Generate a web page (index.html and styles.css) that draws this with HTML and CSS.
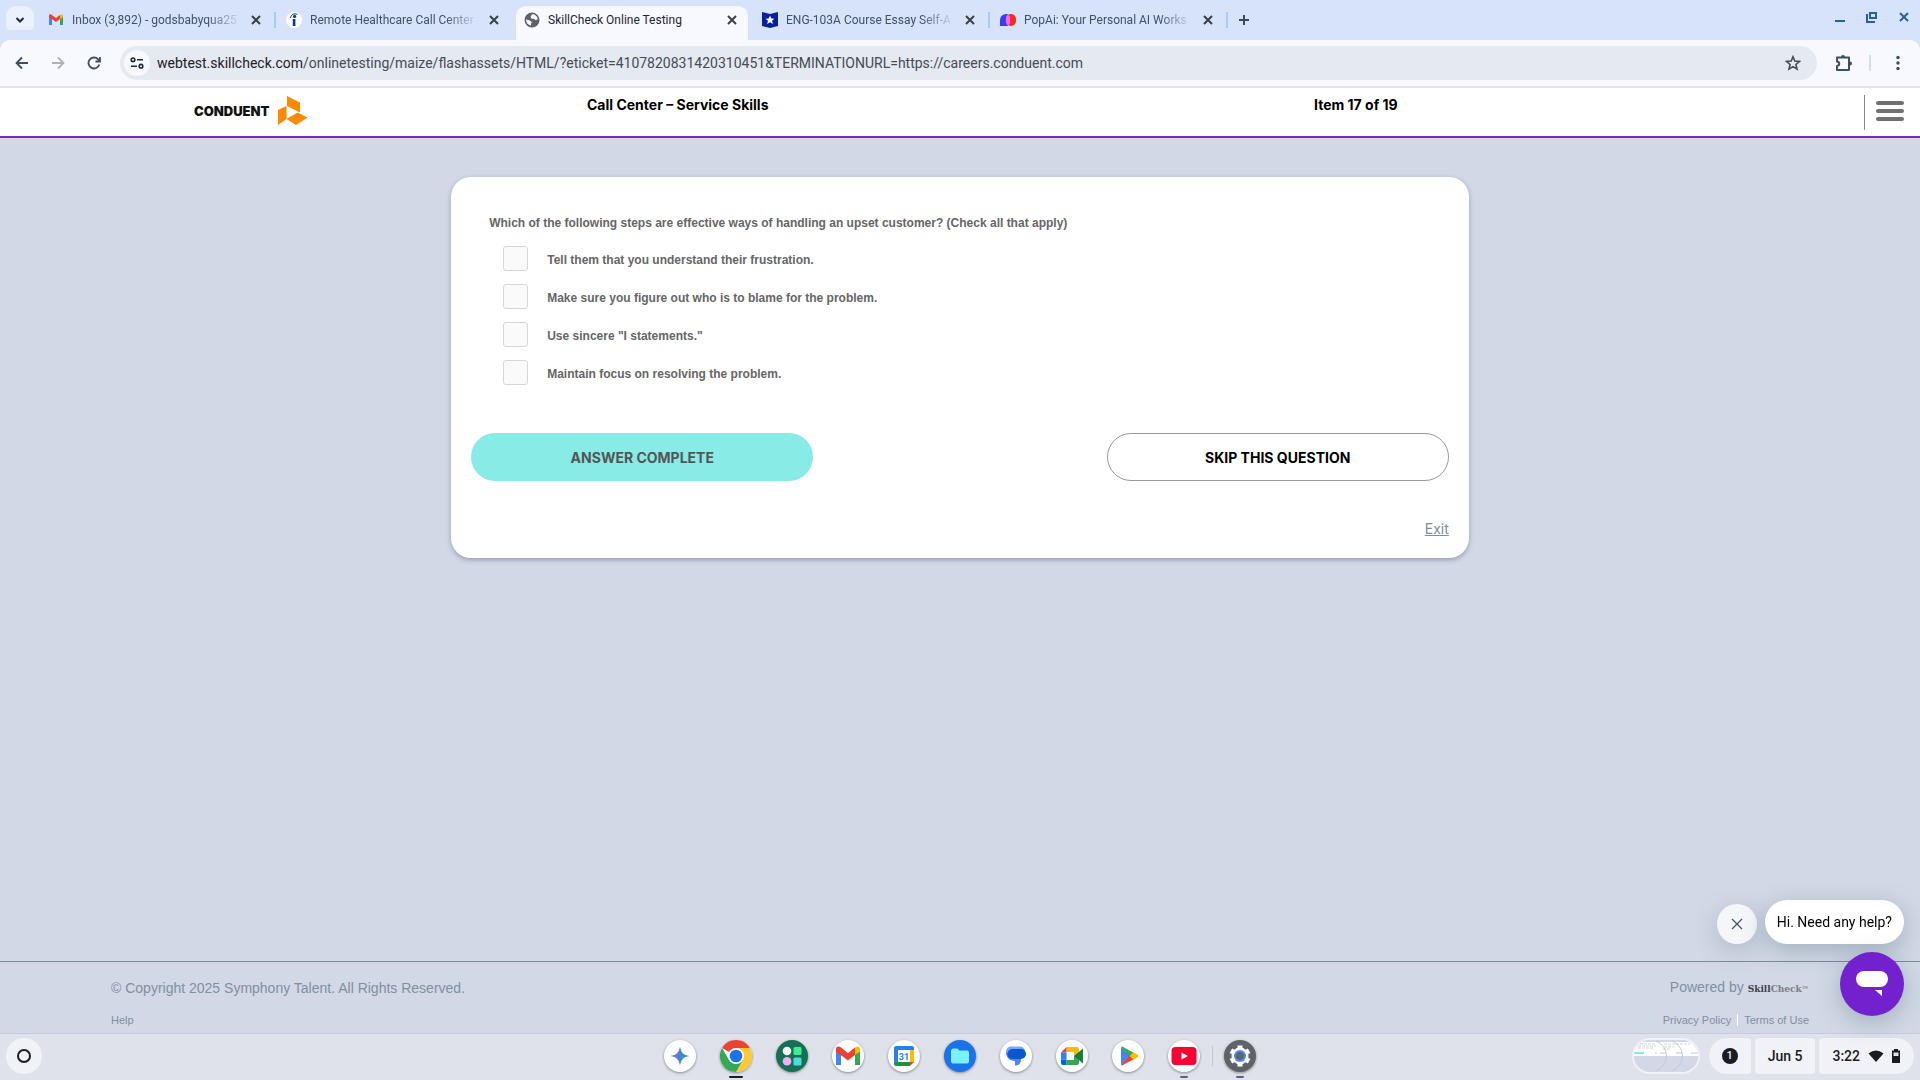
FILE: index.html
```html
<!DOCTYPE html>
<html lang="en">
<head>
    <meta charset="UTF-8">
    <meta name="viewport" content="width=device-width, initial-scale=1.0">
    <title>SkillCheck Online Testing</title>
    <link rel="stylesheet" href="styles.css">
</head>
<body>
    <!-- Tab strip -->
    <div class="tab-strip">
        <button class="tab-search" aria-label="Search tabs">
            <svg width="10" height="10" viewBox="0 0 10 10"><path d="M1.5 3l3.500 3.500L8.500 3" fill="none" stroke="#1f2937" stroke-width="2"/></svg>
        </button>
        <div class="tab">
            <svg class="favicon" viewBox="0 0 16 16"><path d="M1 4v9h3V6z" fill="#4285f4"/><path d="M12 6v7h3V4z" fill="#34a853"/><path d="M1 3.500C1 2 3 2 4 3l4 3v4L1 5z" fill="#ea4335"/><path d="M8 6l4-3v4L8 10z" fill="#ea4335"/><path d="M12 3c1-1 3-1 3 .5V5l-3 2.200z" fill="#fbbc04"/></svg>
            <span class="tab-title fade">Inbox (3,892) - godsbabyqua25</span>
            <button class="tab-close" aria-label="Close tab"><svg width="10" height="10" viewBox="0 0 10 10"><path d="M1 1l8 8M9 1L1 9"/></svg></button>
        </div>
        <div class="tab">
            <svg class="favicon" viewBox="0 0 16 16"><circle cx="8" cy="8" r="8" fill="#fff"/><path d="M6.800 7h2.600v7H6.800z" fill="#003a9b"/><circle cx="8.600" cy="4.400" r="1.600" fill="#003a9b"/><path d="M4.500 6C5 2.500 8 .8 11.500 2.500" fill="none" stroke="#003a9b"/></svg>
            <span class="tab-title fade">Remote Healthcare Call Center</span>
            <button class="tab-close" aria-label="Close tab"><svg width="10" height="10" viewBox="0 0 10 10"><path d="M1 1l8 8M9 1L1 9"/></svg></button>
        </div>
        <div class="tab active">
            <svg class="favicon" viewBox="0 0 16 16"><circle cx="8" cy="8" r="7.500" fill="#5f6368"/><path d="M2 7.500l4 1 2 2-1 1v2C4 13 2 11 2 7.500zM8 2.200c3 0 5.500 2 5.800 5l-2 1-2-1.500H7.500L6.500 5z" fill="#f8f9fe"/></svg>
            <span class="tab-title">SkillCheck Online Testing</span>
            <button class="tab-close" aria-label="Close tab"><svg width="10" height="10" viewBox="0 0 10 10"><path d="M1 1l8 8M9 1L1 9"/></svg></button>
        </div>
        <div class="tab">
            <svg class="favicon" viewBox="0 0 16 16"><path d="M0 0l8 2 8-2v14l-8 2-8-2z" fill="#0a1f9c"/><path d="M8 3.500l1.300 3 3.200.2-2.500 2 .9 3.200L8 10.200l-2.900 1.700.9-3.200-2.500-2 3.200-.2z" fill="#fff"/></svg>
            <span class="tab-title fade">ENG-103A Course Essay Self-A</span>
            <button class="tab-close" aria-label="Close tab"><svg width="10" height="10" viewBox="0 0 10 10"><path d="M1 1l8 8M9 1L1 9"/></svg></button>
        </div>
        <div class="tab">
            <svg class="favicon" viewBox="0 0 16 16"><path d="M0 14V8a6 6 0 0 1 6-6c3 0 4 2 4 6s-1 6-4 6z" fill="#3b3bff"/><rect x="6" y="2" width="10" height="12" rx="5" fill="#ff2a1c"/><ellipse cx="8" cy="8" rx="2.200" ry="5" fill="#f76bf0"/></svg>
            <span class="tab-title fade">PopAi: Your Personal AI Works</span>
            <button class="tab-close" aria-label="Close tab"><svg width="10" height="10" viewBox="0 0 10 10"><path d="M1 1l8 8M9 1L1 9"/></svg></button>
        </div>
        <button class="new-tab" aria-label="New tab"><svg width="12" height="12" viewBox="0 0 12 12"><path d="M6 1v10M1 6h10" stroke="#3c4858" stroke-width="2"/></svg></button>
        <div class="window-controls">
            <button aria-label="Minimize"><svg width="12" height="12" viewBox="0 0 12 12"><path d="M1 10h10" stroke="#28609f" stroke-width="2"/></svg></button>
            <button aria-label="Restore"><svg width="12" height="12" viewBox="0 0 12 12"><path d="M4 2h6v5H4zM1 3v8h8" fill="none" stroke="#28609f" stroke-width="2"/></svg></button>
            <button aria-label="Close"><svg width="12" height="12" viewBox="0 0 12 12"><path d="M2 2l8 8M10 2l-8 8" stroke="#28609f" stroke-width="2"/></svg></button>
        </div>
    </div>

    <!-- Toolbar -->
    <div class="toolbar">
        <button class="nav-btn" aria-label="Back"><svg width="14" height="14" viewBox="0 0 14 14"><path d="M13 7H2M7 1.500L1.500 7 7 12.500" fill="none" stroke="#3f4d60" stroke-width="1.800"/></svg></button>
        <button class="nav-btn" aria-label="Forward"><svg width="14" height="14" viewBox="0 0 14 14"><path d="M1 7h11M7 1.500L12.500 7 7 12.500" fill="none" stroke="#aeb1b8" stroke-width="1.800"/></svg></button>
        <button class="nav-btn" aria-label="Reload"><svg width="14" height="14" viewBox="0 0 14 14"><path d="M12.300 8.500A5.500 5.500 0 1 1 11 3.200L12.500 5M13 1v4.500H8.500" fill="none" stroke="#3f4d60" stroke-width="1.800"/></svg></button>
        <div class="omnibox">
            <button class="site-info" aria-label="View site information"><svg width="14" height="12" viewBox="0 0 14 12"><g fill="none" stroke="#1f2937" stroke-width="1.600"><circle cx="3" cy="2.800" r="1.800"/><path d="M7 2.800h6M1 9.200h6"/><circle cx="11" cy="9.200" r="1.800"/></g></svg></button>
            <a class="url" href="#"><span class="host">webtest.skillcheck.com</span>/onlinetesting/maize/flashassets/HTML/?eticket=4107820831420310451&amp;TERMINATIONURL=https://careers.conduent.com</a>
            <button class="bookmark" aria-label="Bookmark this tab"><svg width="16" height="16" viewBox="0 0 16 16"><path d="M8 1.800l1.800 4.300 4.600.4-3.500 3 1.100 4.600L8 11.600l-4 2.500 1.100-4.600-3.500-3 4.600-.4z" fill="none" stroke="#444b58" stroke-width="1.600"/></svg></button>
        </div>
        <button class="extensions" aria-label="Extensions"><svg width="18" height="18" viewBox="0 0 18 18"><path d="M2 3.500h12v12.500H2v-4c3-.5 3-4 0-4.500z" fill="none" stroke="#3f4d60" stroke-width="2" stroke-linejoin="round"/><path d="M6 3a2 2 0 0 1 4 0zM15 7.500a2 2 0 0 1 0 4z" fill="#3f4d60"/></svg></button>
        <span class="toolbar-divider"></span>
        <button class="menu-btn" aria-label="Chrome menu"><svg width="4" height="16" viewBox="0 0 4 16"><g fill="#3f4d60"><circle cx="2" cy="2.500" r="1.700"/><circle cx="2" cy="8" r="1.700"/><circle cx="2" cy="13.500" r="1.700"/></g></svg></button>
    </div>

    <!-- Site header -->
    <header>
        <div class="logo">
            <span>CONDUENT</span>
            <svg width="30" height="30" viewBox="0 0 30 30"><path d="M9 0l13 6.500v10L9 10zM0 14l8.500-4v13L0 29zM8.500 23l11-6.500 10 5L18 29z" fill="#ff8a00"/></svg>
        </div>
        <div class="test-name">Call Center – Service Skills</div>
        <div class="item-count">Item 17 of 19</div>
        <button class="hamburger" aria-label="Menu"><span></span><span></span><span></span></button>
    </header>

    <main>
        <form class="card">
            <fieldset>
                <legend>Which of the following steps are effective ways of handling an upset customer? (Check all that apply)</legend>
                <div class="option">
                    <input type="checkbox" id="opt-1">
                    <label for="opt-1">Tell them that you understand their frustration.</label>
                </div>
                <div class="option">
                    <input type="checkbox" id="opt-2">
                    <label for="opt-2">Make sure you figure out who is to blame for the problem.</label>
                </div>
                <div class="option">
                    <input type="checkbox" id="opt-3">
                    <label for="opt-3">Use sincere "I statements."</label>
                </div>
                <div class="option">
                    <input type="checkbox" id="opt-4">
                    <label for="opt-4">Maintain focus on resolving the problem.</label>
                </div>
            </fieldset>
            <div class="actions">
                <button type="submit" class="btn btn-answer">ANSWER COMPLETE</button>
                <button type="button" class="btn btn-skip">SKIP THIS QUESTION</button>
            </div>
            <a class="exit" href="#">Exit</a>
        </form>
    </main>

    <footer>
        <div class="footer-row">
            <span>© Copyright 2025 Symphony Talent. All Rights Reserved.</span>
            <span>Powered by <span class="brand"><b>Skill</b>Check<small>™</small></span></span>
        </div>
        <div class="footer-row footer-links">
            <a href="#">Help</a>
            <span class="legal"><a href="#">Privacy Policy</a><a href="#">Terms of Use</a></span>
        </div>
    </footer>

    <!-- Chat widget -->
    <div class="chat">
        <div class="chat-row">
            <button class="chat-close" aria-label="Close message"><svg width="12" height="12" viewBox="0 0 12 12"><path d="M1 1l10 10M11 1L1 11" stroke="#49566a" stroke-width="1.300"/></svg></button>
            <div class="chat-message">Hi. Need any help?</div>
        </div>
        <button class="chat-open" aria-label="Open chat"><svg width="32" height="26" viewBox="0 0 32 26"><rect width="32" height="16" rx="8" fill="#fff"/><path d="M19 19h7v6z" fill="#fff"/></svg></button>
    </div>

    <!-- Shelf -->
    <div class="shelf">
        <div class="shelf-side">
            <button class="launcher" aria-label="Launcher"></button>
        </div>
        <div class="apps">
            <button class="app" aria-label="Gemini"><svg viewBox="0 0 32 32"><defs><linearGradient id="spark"><stop offset="0" stop-color="#9a6bc0"/><stop offset=".5" stop-color="#4384d0"/><stop offset="1" stop-color="#29a0dc"/></linearGradient></defs><path d="M16 6.500c1 6 3.500 8.500 9.500 9.500-6 1-8.500 3.500-9.500 9.500-1-6-3.500-8.500-9.500-9.500 6-1 8.500-3.500 9.500-9.500z" fill="url(#spark)"/></svg></button>
            <button class="app current" aria-label="Chrome"><svg viewBox="0 0 32 32"><path d="M16 16L2.140 8A16 16 0 0 1 29.860 8z" fill="#ea4335"/><path d="M16 8h13.860A16 16 0 0 1 16 32l7-12z" fill="#fbc934"/><path d="M2.140 8A16 16 0 0 0 16 32l7-12-14 0z" fill="#34a853"/><circle cx="16" cy="16" r="8" fill="#fff"/><circle cx="16" cy="16" r="6.300" fill="#1a73e8"/></svg></button>
            <button class="app app-green" aria-label="Apps"><svg viewBox="0 0 32 32"><circle cx="11" cy="11" r="4.300" fill="#fff"/><rect x="17.500" y="7" width="8" height="8" rx="1.500" fill="#40ee90"/><circle cx="11" cy="21.300" r="4.300" fill="#f1aef5"/><rect x="17.500" y="17.500" width="8" height="8" rx="1.500" fill="#4eded8"/></svg></button>
            <button class="app" aria-label="Gmail"><svg viewBox="0 0 32 32"><path d="M4 9v16h5V13z" fill="#4285f4"/><path d="M23 13v12h5V9z" fill="#34a853"/><path d="M4 9c0-3 3-3 5-1.500l7 5.500 7-5.500V15l-7 5.500L4 11.500z" fill="#ea4335"/><path d="M23 7.500C25 6 28 6 28 9v2.500L23 15z" fill="#fbbc04"/></svg></button>
            <button class="app" aria-label="Calendar"><svg viewBox="0 0 32 32"><path d="M6 8q0-2 2-2h16q2 0 2 2v3H6z" fill="#2c80ee"/><path d="M6 10h5v12H6z" fill="#2c80ee"/><path d="M22 10h4v12h-4z" fill="#fbbc04"/><path d="M6 22h16v4H8q-2 0-2-2z" fill="#17963d"/><path d="M22 22h4l-4 4z" fill="#ea4335"/><path d="M10 10h12v12H10z" fill="#fff"/><text x="16" y="20" text-anchor="middle" class="cal-day">31</text></svg></button>
            <button class="app app-blue" aria-label="Files"><svg viewBox="0 0 32 32"><path d="M7 11q0-2.500 2.500-2.500h4l2 2H23q2 0 2 2v9q0 2-2 2H9q-2 0-2-2z" fill="#7cf1fa"/></svg></button>
            <button class="app" aria-label="Messages"><svg viewBox="0 0 32 32"><path d="M11 6.500h9a5 5 0 0 1 5 5v3H6v-3a5 5 0 0 1 5-5z" fill="#7aa7ff"/><path d="M6 12c0 5 3 9 9 9v4.500c4 0 6-2 6-6.500z" fill="#4c85f7"/><rect x="7.500" y="9" width="18.500" height="10" rx="5" fill="#0b57d0"/></svg></button>
            <button class="app" aria-label="Meet"><svg viewBox="0 0 32 32"><path d="M10.500 7H21q2 0 2 2v7h-5v-4h-7.500z" fill="#fbbc04"/><path d="M5 12.500L10.500 7v5.500z" fill="#ea4335"/><path d="M5 12.500h5.500v7H5z" fill="#2684fc"/><path d="M5 19.500h5.500V25H7q-2 0-2-2z" fill="#0066da"/><path d="M10.500 20H18v-4h5v7q0 2-2 2H10.500z" fill="#34a853"/><path d="M18 16l9-7.500v15z" fill="#188038"/></svg></button>
            <button class="app" aria-label="Play Store"><svg viewBox="0 0 32 32"><path d="M9 7v18l9-9z" fill="#4285f4"/><path d="M9 7q1-1 2 0l11 6-4 4z" fill="#34a853"/><path d="M9 25q1 1 2 0l11-6-4-4z" fill="#ea4335"/><path d="M21.500 12.200l4.500 2.800q1.300 1 0 2l-4.500 2.800-4-3.800z" fill="#fbbc04"/></svg></button>
            <button class="app running" aria-label="YouTube"><svg viewBox="0 0 32 32"><rect x="3.500" y="7" width="25" height="18" rx="4" fill="#ff0033"/><path d="M13.500 12.500l6.500 3.500-6.500 3.500z" fill="#fff"/></svg></button>
            <span class="apps-divider"></span>
            <button class="app app-gray running" aria-label="Settings"><svg viewBox="0 0 32 32"><circle cx="16" cy="16" r="8.500" fill="#fff"/><path d="M16 5.500v21M6.900 10.750l18.200 10.500M25.100 10.750L6.900 21.250" stroke="#fff" stroke-width="5"/><circle cx="16" cy="16" r="6" fill="#4b8df8"/><circle cx="16" cy="16" r="4" fill="#5b6470"/></svg></button>
        </div>
        <div class="shelf-side status">
            <button class="holding" aria-label="Recent screen captures">
                <svg width="64" height="32" viewBox="0 0 64 32">
                    <path d="M0 0h64v32H0z" fill="#d2d8e6"/>
                    <path d="M0 2h64v14H0z" fill="#fff"/>
                    <path d="M2 4h20M4 6h18M4 8h16M30 4h26M30 7h10M29 9h8" stroke="#d3d3d6" stroke-dasharray="3 1"/>
                    <path d="M0 13h10" stroke="#87ebe6" stroke-width="2"/>
                    <path d="M21 13h2M26 13h6M42 13h6M57 13h7" stroke="#c4c4c8"/>
                    <path d="M22 1a16 16 0 0 1 0 30M38 1a16 16 0 0 1 0 30" fill="none" stroke="#c3c7d2"/>
                </svg>
            </button>
            <div class="status-group">
                <button class="pill pill-first"><span class="badge">1</span></button>
                <button class="pill">Jun 5</button>
                <button class="pill pill-last">3:22
                    <svg width="16" height="12" viewBox="0 0 16 12"><path d="M8 12L.5 3.500Q8-2.500 15.500 3.500z" fill="#191c20"/></svg>
                    <svg width="8" height="14" viewBox="0 0 8 14"><path d="M2 0h4v1.500h2V14H0V1.500h2z" fill="#191c20"/><path d="M1.500 3.500h5V7h-5z" fill="#dfe2ea"/></svg>
                </button>
            </div>
        </div>
    </div>
</body>
</html>
```
FILE: styles.css
```css
* {
    box-sizing: border-box;
}

body {
    margin: 0;
    min-height: 100vh;
    display: flex;
    flex-direction: column;
    font-family: Inter, "Liberation Sans", sans-serif;
    background-color: #d2d8e6;
}

button {
    border: none;
    padding: 0;
    background: none;
    font-family: inherit;
    cursor: pointer;
}

svg {
    display: block;
    flex-shrink: 0;
}

/* Tab strip */
.tab-strip {
    display: flex;
    align-items: flex-end;
    height: 40px;
    padding: 0 8px 0 6px;
    background-color: #d7e3fa;
    font-family: Roboto, sans-serif;
}

.tab-search {
    display: flex;
    align-items: center;
    justify-content: center;
    width: 28px;
    height: 28px;
    margin: 0 4px 6px 0;
    border-radius: 10px;
    background-color: #ebf1fd;
}

.tab {
    position: relative;
    display: flex;
    align-items: center;
    width: 238px;
    height: 34px;
    padding: 0 15px 6px 10px;
    color: #41506a;
    font-size: 12px;
}

.tab::after {
    content: "";
    position: absolute;
    right: 0;
    top: 6px;
    width: 2px;
    height: 16px;
    background-color: #a8c9fa;
}

.tab.active::after,
.tab:has(+ .active)::after {
    display: none;
}

.tab.active {
    width: 232px;
    margin: 0 4px 0 2px;
    padding: 0 11px 6px 8px;
    border-radius: 10px 10px 0 0;
    background-color: #f8f9fe;
    color: #1f2430;
}

.favicon {
    width: 16px;
    height: 16px;
    margin-right: 8px;
}

.tab-title {
    flex: 1;
    white-space: nowrap;
}

.tab-title.fade {
    mask-image: linear-gradient(to right, #000 80%, transparent);
}

.tab-close {
    margin-left: 10px;
}

.tab-close path {
    stroke: #3c4043;
    stroke-width: 2;
}

.new-tab {
    margin: 0 0 14px 10px;
}

.window-controls {
    display: flex;
    gap: 20px;
    margin: 0 2px 17px auto;
}

/* Toolbar */
.toolbar {
    display: flex;
    align-items: center;
    height: 48px;
    padding: 0 20px 0 15px;
    background-color: #f8f9fe;
    border-bottom: 2px solid #dfe3ec;
    border-radius: 10px 10px 0 0;
    box-shadow: 0 -10px 0 0 #d7e3fa;
    font-family: Roboto, sans-serif;
}

.nav-btn {
    margin-right: 22px;
}

.omnibox {
    flex: 1;
    display: flex;
    align-items: center;
    height: 34px;
    margin-left: -3px;
    padding: 0 16px 0 4px;
    border-radius: 17px;
    background-color: #e4e9f2;
}

.site-info {
    display: flex;
    align-items: center;
    justify-content: center;
    width: 26px;
    height: 26px;
    margin-right: 7px;
    border-radius: 50%;
    background-color: #f8f9fe;
}

.url {
    flex: 1;
    color: #474b54;
    font-size: 14px;
    text-decoration: none;
}

.url .host {
    color: #1f2025;
}

.extensions {
    margin-left: 18px;
}

.toolbar-divider {
    width: 2px;
    height: 16px;
    margin: 0 25px 0 16px;
    background-color: #cfe0fb;
}

/* Site header */
header {
    display: grid;
    grid-template-columns: 395fr 727fr 550fr auto;
    height: 50px;
    padding-left: 10%;
    background-color: #fff;
    border-bottom: 2px solid #7429c9;
}

.logo {
    display: flex;
    align-items: center;
    gap: 9px;
    padding: 0 0 2px 2px;
    font-size: 13px;
    font-weight: 900;
    color: #111;
}

.test-name,
.item-count {
    padding-top: 8px;
    font-size: 14px;
    line-height: 18px;
    font-weight: 700;
}

.hamburger {
    display: flex;
    flex-direction: column;
    justify-content: center;
    gap: 4px;
    height: 35px;
    margin: 7px 16px 0 0;
    padding: 0 0 3px 11px;
    border-left: 1px solid #888;
}

.hamburger span {
    width: 28px;
    height: 4px;
    border-radius: 2px;
    background-color: #707070;
}

/* Question card */
main {
    flex: 1;
}

.card {
    display: flex;
    flex-direction: column;
    width: 53%;
    margin: 39px auto 0;
    padding: 38px 20px 19px;
    background-color: #fff;
    border-radius: 20px;
    box-shadow: 0 2px 5px rgba(60, 70, 100, 0.4);
}

fieldset {
    margin: 0 18px;
    padding: 0;
    border: none;
    color: #666;
    font-family: "Liberation Sans", Arial, sans-serif;
    font-size: 12px;
    font-weight: bold;
    line-height: 16px;
}

legend {
    padding: 0;
    margin-bottom: 15px;
}

.option {
    display: flex;
    align-items: flex-start;
    height: 26px;
    margin: 0 0 12px 14px;
}

.option input {
    appearance: none;
    width: 25px;
    height: 25px;
    margin: 0 19px 0 0;
    border: 1px solid #d6d6d6;
    border-radius: 3px;
    background-color: #fafafa;
}

.option label {
    padding-top: 6px;
}

.actions {
    display: flex;
    justify-content: space-between;
    margin-top: 35px;
}

.btn {
    width: 35%;
    height: 48px;
    border-radius: 24px;
    font-size: 14px;
    font-weight: 700;
}

.btn-answer {
    background-color: #87ebe6;
    color: #555;
}

.btn-skip {
    border: 1px solid #999;
    color: #000;
}

.exit {
    align-self: flex-end;
    margin-top: 38px;
    color: #7d8d9b;
    font-size: 14px;
    line-height: 20px;
}

/* Footer */
footer {
    display: flex;
    flex-direction: column;
    gap: 13px;
    padding: 15px 111px 5px;
    border-top: 1px solid #7c8b99;
    color: #80909f;
    font-family: "Liberation Sans", Arial, sans-serif;
}

.footer-row {
    display: flex;
    justify-content: space-between;
    align-items: center;
    font-size: 14px;
    line-height: 20px;
}

.brand {
    font-family: "DejaVu Serif Condensed", "DejaVu Serif", serif;
    font-size: 10px;
    font-weight: bold;
    color: #7b7d82;
}

.brand b {
    color: #3f424b;
}

.brand small {
    font-size: 8px;
}

.footer-links {
    font-size: 11px;
    line-height: 16px;
}

.footer-links a {
    color: #80909f;
    text-decoration: none;
}

.legal a + a {
    margin-left: 6px;
    padding-left: 6px;
    border-left: 1px solid #fff;
}

/* Chat widget */
.chat {
    position: fixed;
    right: 16px;
    bottom: 64px;
    display: flex;
    flex-direction: column;
    align-items: flex-end;
    gap: 8px;
    font-family: Roboto, sans-serif;
}

.chat-row {
    display: flex;
    align-items: flex-end;
    gap: 8px;
}

.chat-close {
    display: flex;
    align-items: center;
    justify-content: center;
    width: 40px;
    height: 40px;
    border-radius: 50%;
    background-color: #f4f6fa;
    box-shadow: 0 6px 24px rgba(70, 100, 110, 0.25);
}

.chat-message {
    padding: 12px;
    border-radius: 22px;
    background-color: #fff;
    box-shadow: 0 6px 24px rgba(70, 100, 110, 0.35);
    font-size: 14px;
    line-height: 20px;
    white-space: nowrap;
}

.chat-open {
    display: flex;
    align-items: center;
    justify-content: center;
    width: 64px;
    height: 64px;
    border-radius: 50%;
    background-color: #7321cf;
    box-shadow: 0 6px 24px rgba(70, 100, 110, 0.35);
}

/* Shelf */
.shelf {
    display: flex;
    align-items: center;
    height: 47px;
    padding: 0 6px 2px;
    background-color: #dfe2ea;
    border-top: 1px solid #c8ccda;
    font-family: Roboto, sans-serif;
}

.shelf-side {
    flex: 1;
    display: flex;
}

.launcher {
    display: flex;
    align-items: center;
    justify-content: center;
    width: 36px;
    height: 36px;
    border-radius: 50%;
    background-color: #f1f1f8;
}

.launcher::before {
    content: "";
    width: 10px;
    height: 10px;
    border: 2px solid #191c20;
    border-radius: 50%;
}

.apps {
    display: flex;
    align-items: center;
    gap: 24px;
}

.app {
    position: relative;
    width: 32px;
    height: 32px;
    border-radius: 50%;
    background-color: #fff;
    box-shadow: 0 1px 3px rgba(0, 0, 0, 0.4);
}

.app-green {
    background-color: #157055;
}

.app-blue {
    background-color: #1a73e8;
}

.app-gray {
    background-color: #5f6368;
}

.app.current::after,
.app.running::after {
    content: "";
    position: absolute;
    left: 12px;
    bottom: -6px;
    width: 8px;
    height: 2px;
    border-radius: 1px;
    background-color: #5a6378;
}

.app.current::after {
    left: 9px;
    width: 14px;
    background-color: #191c20;
}

.cal-day {
    font-size: 9px;
    font-weight: bold;
    fill: #2c80ee;
}

.apps-divider {
    width: 1px;
    height: 20px;
    margin: 0 -13px 0 -12px;
    background-color: #c3c6d0;
}

.status {
    justify-content: flex-end;
    gap: 9px;
}

.status-group {
    display: flex;
    gap: 4px;
}

.holding {
    width: 68px;
    height: 36px;
    border: 2px solid #f1f1f8;
    border-radius: 18px;
    overflow: hidden;
}

.pill {
    display: flex;
    align-items: center;
    gap: 8px;
    height: 36px;
    padding: 0 13px;
    border-radius: 4px;
    background-color: #f1f1f8;
    color: #191c20;
    font-size: 14px;
    font-weight: 500;
}

.pill-first {
    border-radius: 18px 4px 4px 18px;
}

.pill-last {
    padding-right: 14px;
    border-radius: 4px 18px 18px 4px;
}

.badge {
    width: 16px;
    height: 16px;
    border-radius: 50%;
    background-color: #191c20;
    color: #f1f1f8;
    font-size: 11px;
    line-height: 16px;
}
```
